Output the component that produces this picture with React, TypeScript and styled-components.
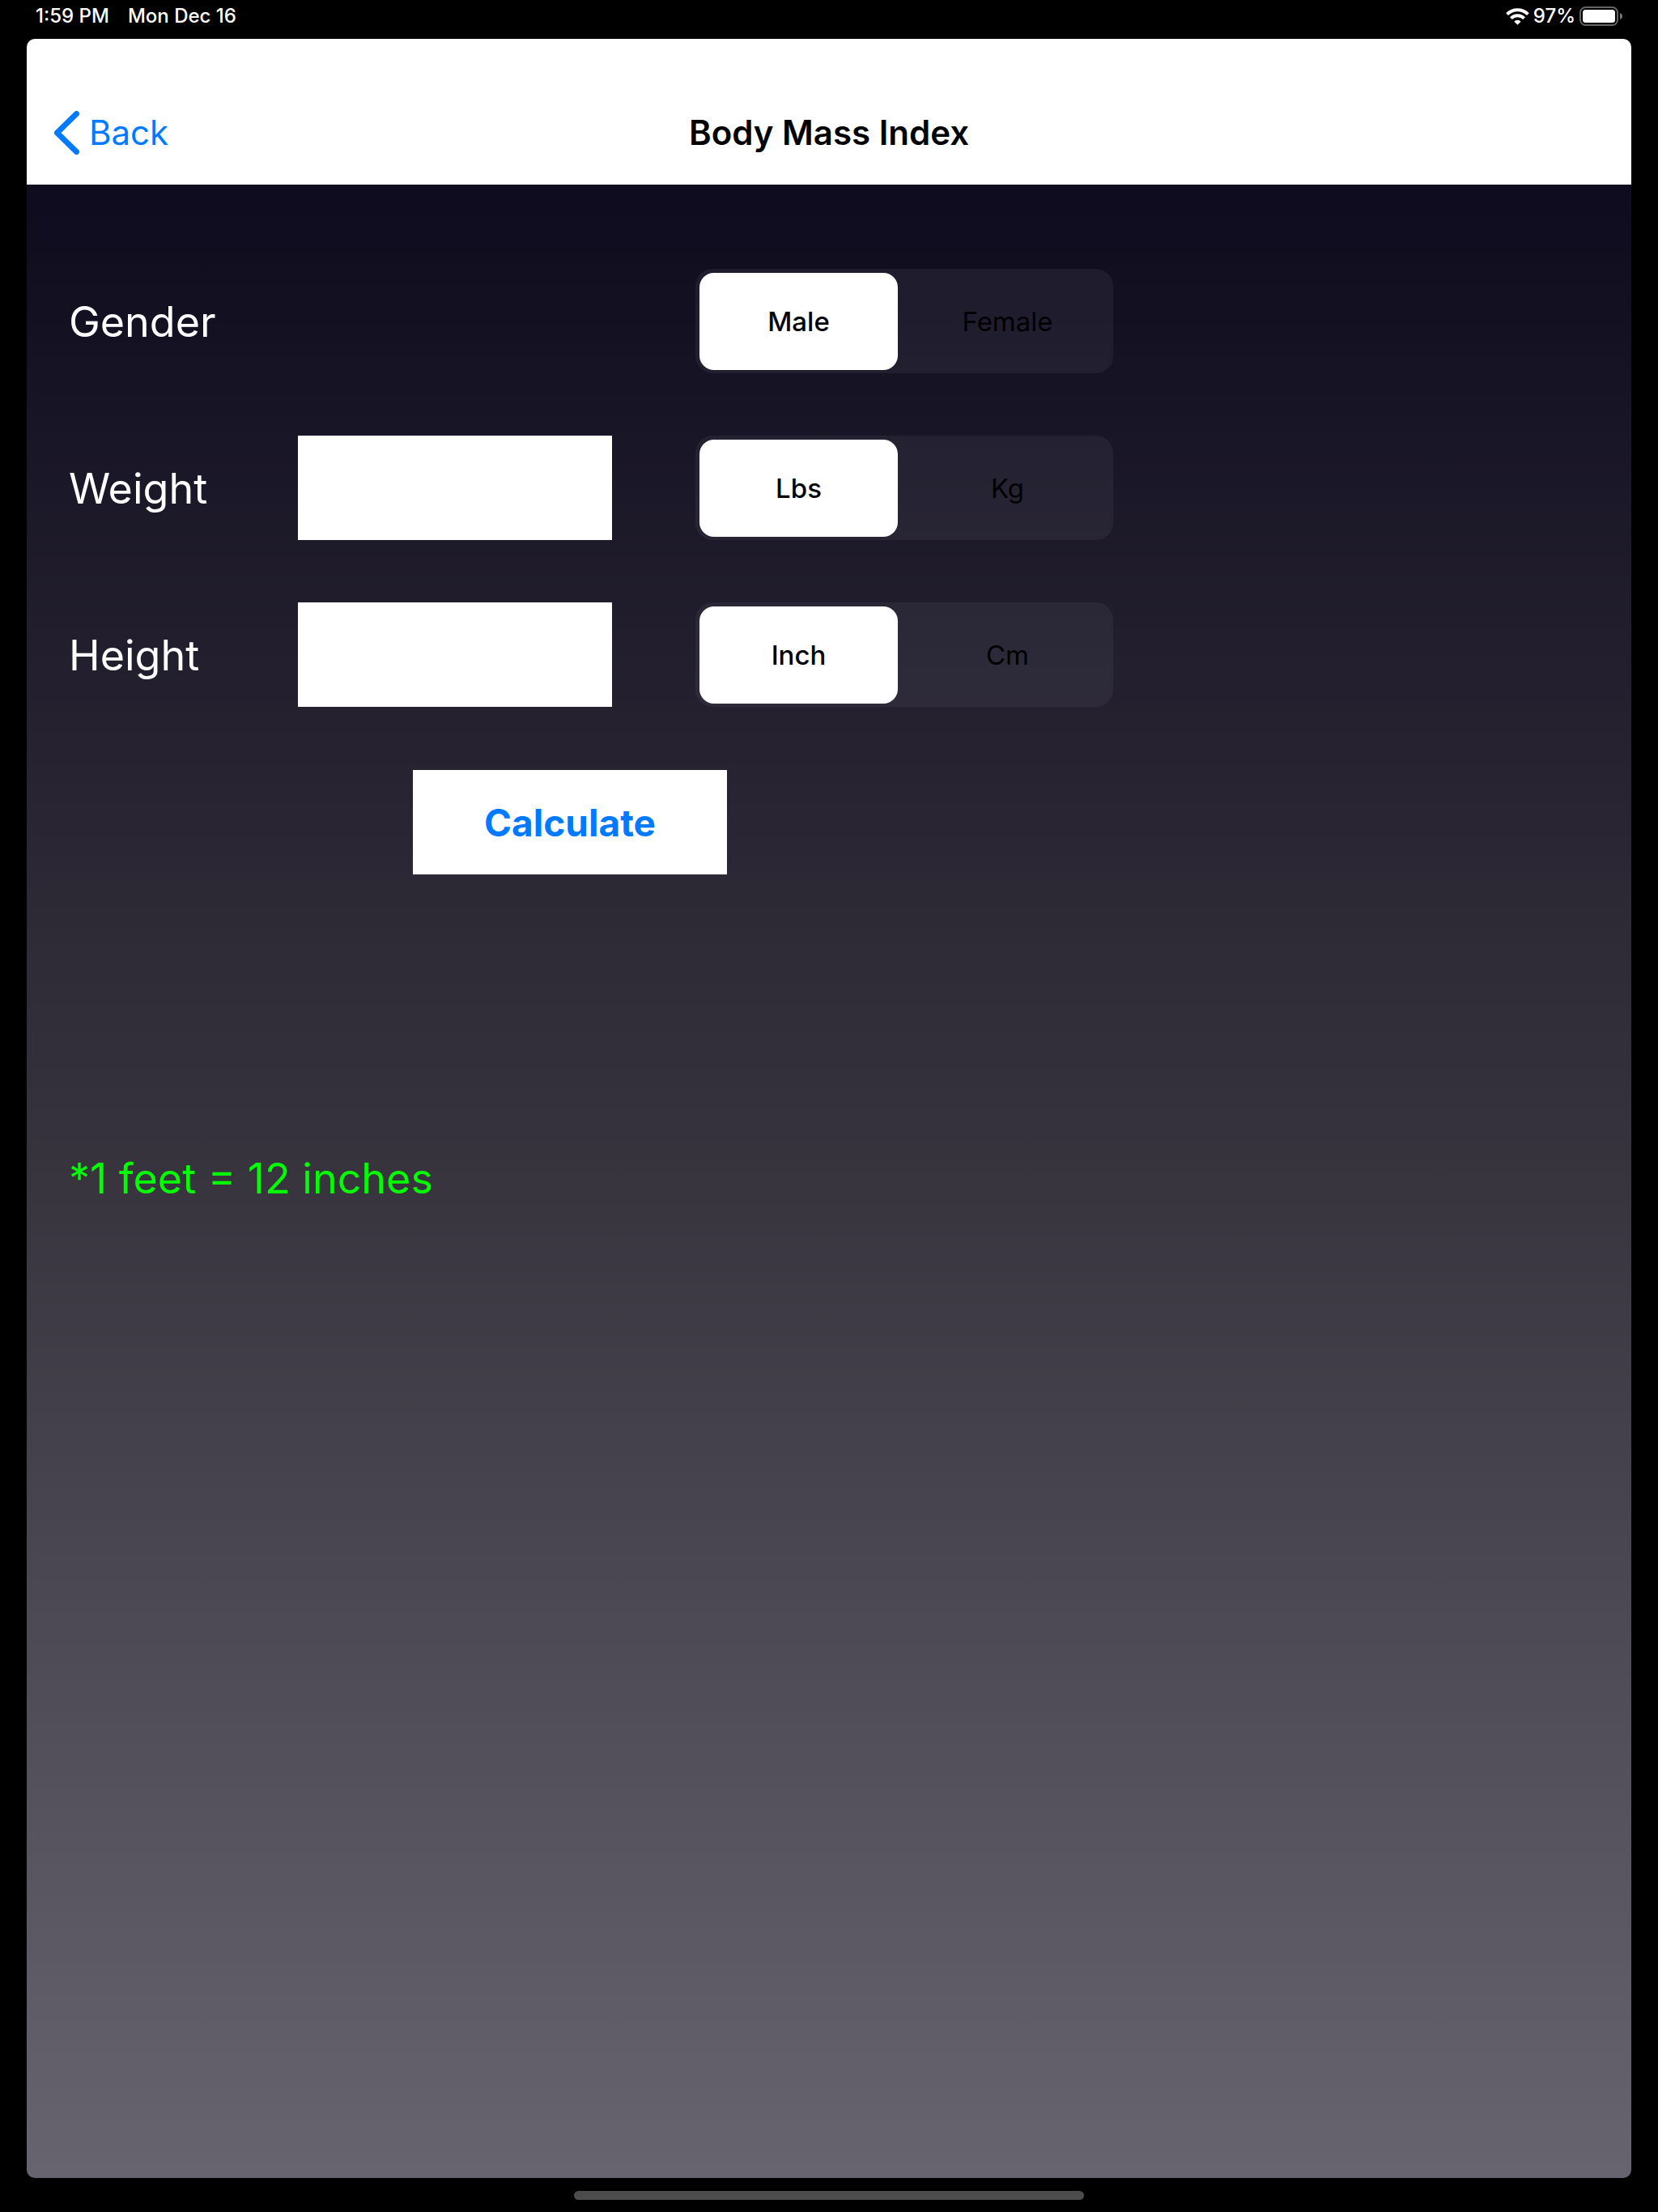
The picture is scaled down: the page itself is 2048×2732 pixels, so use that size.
import React, { useState } from "react";
import styled, { createGlobalStyle } from "styled-components";

const GlobalStyle = createGlobalStyle`
  *, *::before, *::after { box-sizing: border-box; }
  body {
    margin: 0;
    background: #000;
    font-family: Inter, "Liberation Sans", sans-serif;
    -webkit-font-smoothing: antialiased;
  }
  button, input { font-family: inherit; }
`;

const Screen = styled.div`
  display: flex;
  flex-direction: column;
  min-height: 100vh;
`;

const StatusBar = styled.header`
  display: flex;
  align-items: center;
  justify-content: space-between;
  height: 48px;
  padding: 0 43px 8px 44px;
  color: #fff;
  font-size: 24px;
  font-weight: 500;
  line-height: 28px;
`;

const StatusGroup = styled.div<{ $gap: number }>`
  display: flex;
  align-items: center;
  gap: ${(p) => p.$gap}px;
`;

const Panel = styled.div`
  display: flex;
  flex: 1;
  flex-direction: column;
  margin: 0 33px;
  border-radius: 10px;
  overflow: hidden;
  background: linear-gradient(180deg, #0d0a1e 0%, #0f0c1f 8%, #37333d 52%, #67646f 100%);
`;

const NavBar = styled.nav`
  display: grid;
  grid-template-columns: 1fr auto 1fr;
  align-items: center;
  height: 180px;
  padding: 52px 33px 0;
  background: #fff;
`;

const BackLink = styled.a`
  display: flex;
  align-items: center;
  gap: 11px;
  justify-self: start;
  color: #007aff;
  font-size: 42px;
  line-height: 52px;
  text-decoration: none;
`;

const Title = styled.h1`
  margin: 0;
  color: #000;
  font-size: 42px;
  font-weight: 600;
  line-height: 52px;
`;

const Content = styled.main`
  display: flex;
  flex-direction: column;
  gap: 78px;
  padding: 104px 52px;
`;

const Fields = styled.div`
  display: grid;
  gap: 77px;
`;

const FieldRow = styled.div`
  display: grid;
  grid-template-columns: 283px 388px 516px;
  align-items: center;
`;

const FieldLabel = styled.label`
  padding-top: 2px;
  color: #fff;
  font-size: 52px;
  line-height: 66px;
`;

const ValueInput = styled.input`
  width: 100%;
  height: 129px;
  padding: 0 24px;
  border: 0;
  border-radius: 0;
  background: #fff;
  color: #000;
  font-size: 52px;
  outline: none;
`;

const Segments = styled.div`
  display: grid;
  grid-column: 3;
  grid-template-columns: 1fr 1fr;
  height: 129px;
  margin-left: 103px;
  width: 516px;
  border-radius: 21px;
  background: rgba(118, 118, 128, 0.13);
`;

const Segment = styled.label<{ $selected: boolean }>`
  position: relative;
  display: flex;
  align-items: center;
  justify-content: center;
  margin: 5px 8px 4px 5px;
  border-radius: 18px;
  background: ${(p) => (p.$selected ? "#fff" : "transparent")};
  color: #000;
  font-size: 33px;
  font-weight: ${(p) => (p.$selected ? 500 : 400)};
  line-height: 40px;
  cursor: pointer;
`;

const SegmentRadio = styled.input`
  position: absolute;
  inset: 0;
  width: 100%;
  height: 100%;
  margin: 0;
  opacity: 0;
  cursor: pointer;
`;

const CalculateButton = styled.button`
  width: 388px;
  height: 129px;
  margin-left: 425px;
  padding: 0;
  border: 0;
  background: #fff;
  color: #007aff;
  font-size: 46px;
  font-weight: 700;
  line-height: 56px;
  cursor: pointer;
`;

const Result = styled.output`
  min-height: 187px;
  color: #fff;
  font-size: 52px;
  line-height: 66px;
`;

const Hint = styled.p`
  margin: 0;
  color: #0f0;
  font-size: 52px;
  line-height: 66px;
`;

const HomeArea = styled.footer`
  display: flex;
  justify-content: center;
  height: 42px;
  padding-top: 16px;
`;

const HomeIndicator = styled.div`
  width: 630px;
  height: 11px;
  border-radius: 6px;
  background: #4c4c4c;
`;

const WifiIcon = () => (
  <svg width="29" height="21" viewBox="0 0 29 21" aria-hidden="true">
    <g fill="none" stroke="#fff" strokeWidth="4">
      <path d="M1.6 7.6a18.2 18.2 0 0 1 25.8 0" />
      <path d="M6.4 12.6a11.5 11.5 0 0 1 16.2 0" />
    </g>
    <path fill="#fff" d="M14.5 20.8l-4.2-4.2a5.9 5.9 0 0 1 8.4 0z" />
  </svg>
);

const BatteryIcon = () => (
  <svg width="54" height="24" viewBox="0 0 54 24" aria-hidden="true">
    <rect x="1" y="1" width="46" height="22" rx="6.5" fill="none" stroke="#666" strokeWidth="2" />
    <rect x="4" y="4" width="40" height="16" rx="3.5" fill="#fff" />
    <path d="M50 8c4 1.200 4 6.800 0 8z" fill="#777" />
  </svg>
);

const ChevronIcon = () => (
  <svg width="33" height="54" viewBox="0 0 33 54" aria-hidden="true">
    <path
      d="M28.500 3.500L4.500 27l24 23.500"
      fill="none"
      stroke="#007aff"
      strokeWidth="7"
      strokeLinecap="round"
      strokeLinejoin="round"
    />
  </svg>
);

type SegmentedProps = {
  name: string;
  legend: string;
  options: string[];
  value: string;
  onChange: (value: string) => void;
};

const Segmented = ({ name, legend, options, value, onChange }: SegmentedProps) => (
  <Segments role="radiogroup" aria-label={legend}>
    {options.map((option) => (
      <Segment key={option} $selected={option === value}>
        <SegmentRadio
          type="radio"
          name={name}
          value={option}
          checked={option === value}
          onChange={() => onChange(option)}
        />
        {option}
      </Segment>
    ))}
  </Segments>
);

export default function App() {
  const [gender, setGender] = useState("Male");
  const [weightUnit, setWeightUnit] = useState("Lbs");
  const [heightUnit, setHeightUnit] = useState("Inch");
  const [weight, setWeight] = useState("");
  const [height, setHeight] = useState("");
  const [result, setResult] = useState("");

  const calculate = () => {
    const kilos = Number(weight) * (weightUnit === "Lbs" ? 0.45359237 : 1);
    const metres = Number(height) * (heightUnit === "Inch" ? 0.0254 : 0.01);
    setResult(kilos > 0 && metres > 0 ? (kilos / (metres * metres)).toFixed(1) : "");
  };

  return (
    <>
      <GlobalStyle />
      <Screen>
        <StatusBar>
          <StatusGroup $gap={23}>
            <span>1:59 PM</span>
            <span>Mon Dec 16</span>
          </StatusGroup>
          <StatusGroup $gap={5}>
            <WifiIcon />
            <span>97%</span>
            <BatteryIcon />
          </StatusGroup>
        </StatusBar>
        <Panel>
          <NavBar>
            <BackLink href="#">
              <ChevronIcon />
              Back
            </BackLink>
            <Title>Body Mass Index</Title>
          </NavBar>
          <Content>
            <Fields>
              <FieldRow>
                <FieldLabel as="span">Gender</FieldLabel>
                <Segmented name="gender" legend="Gender" options={["Male", "Female"]} value={gender} onChange={setGender} />
              </FieldRow>
              <FieldRow>
                <FieldLabel htmlFor="weight">Weight</FieldLabel>
                <ValueInput id="weight" inputMode="decimal" value={weight} onChange={(e) => setWeight(e.target.value)} />
                <Segmented name="weight-unit" legend="Weight unit" options={["Lbs", "Kg"]} value={weightUnit} onChange={setWeightUnit} />
              </FieldRow>
              <FieldRow>
                <FieldLabel htmlFor="height">Height</FieldLabel>
                <ValueInput id="height" inputMode="decimal" value={height} onChange={(e) => setHeight(e.target.value)} />
                <Segmented name="height-unit" legend="Height unit" options={["Inch", "Cm"]} value={heightUnit} onChange={setHeightUnit} />
              </FieldRow>
            </Fields>
            <CalculateButton type="button" onClick={calculate}>Calculate</CalculateButton>
            <Result>{result}</Result>
            <Hint>*1 feet = 12 inches</Hint>
          </Content>
        </Panel>
        <HomeArea>
          <HomeIndicator />
        </HomeArea>
      </Screen>
    </>
  );
}
